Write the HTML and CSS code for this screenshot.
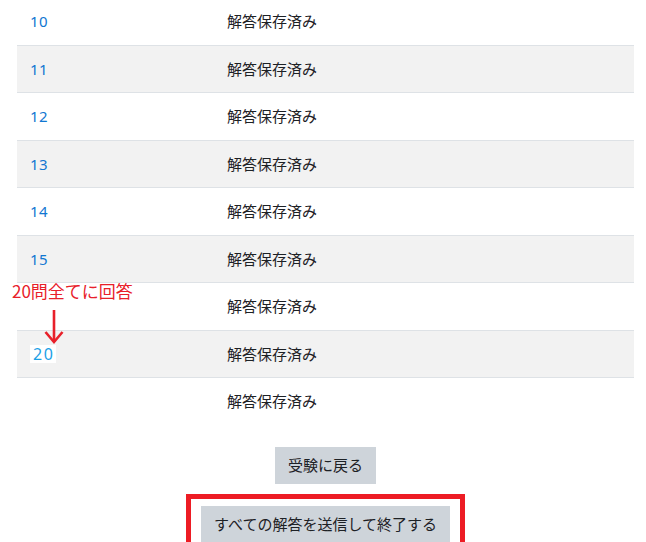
FILE: index.html
```html
<!DOCTYPE html>
<html lang="ja">
<head>
<meta charset="utf-8">
<link rel="stylesheet" href="styles.css">
</head>
<body>
<div class="page">
  <table class="summary">
    <tbody>
      <tr><td class="num"><a href="#">10</a></td><td class="status">解答保存済み</td></tr>
      <tr class="alt"><td class="num"><a href="#">11</a></td><td class="status">解答保存済み</td></tr>
      <tr><td class="num"><a href="#">12</a></td><td class="status">解答保存済み</td></tr>
      <tr class="alt"><td class="num"><a href="#">13</a></td><td class="status">解答保存済み</td></tr>
      <tr><td class="num"><a href="#">14</a></td><td class="status">解答保存済み</td></tr>
      <tr class="alt"><td class="num"><a href="#">15</a></td><td class="status">解答保存済み</td></tr>
      <tr><td class="num"></td><td class="status">解答保存済み</td></tr>
      <tr class="alt"><td class="num"><span class="hl">20</span></td><td class="status">解答保存済み</td></tr>
      <tr><td class="num"></td><td class="status">解答保存済み</td></tr>
    </tbody>
  </table>
  <div class="actions">
    <button class="btn">受験に戻る</button>
    <div class="submit-wrap">
      <button class="btn">すべての解答を送信して終了する</button>
      <div class="redbox"></div>
    </div>
  </div>
  <div class="note">20問全てに回答</div>
  <svg class="arrow" width="20" height="36" viewBox="0 0 20 36">
    <path d="M10 1 V33" stroke="#e8202a" stroke-width="2.6" fill="none"/>
    <path d="M1.5 23 L10 33 L18.5 23" stroke="#e8202a" stroke-width="2.6" fill="none"/>
  </svg>
</div>
</body>
</html>
```

FILE: styles.css
```css
html, body {
  margin: 0;
  padding: 0;
  height: 542px;
  overflow: hidden;
  background: #fff;
}
body {
  font-family: "Noto Sans", "Noto Sans CJK JP", sans-serif;
  font-size: 15px;
  color: #1d2125;
}
.page {
  position: relative;
  width: 617px;
  padding-left: 17px;
}
.summary {
  width: 617px;
  border-collapse: collapse;
  margin-top: -3px;
}
.summary td {
  border-top: 1px solid #dee2e6;
  padding: 12px 0;
  line-height: 22.5px;
  height: 22.5px;
  vertical-align: middle;
}
.summary tr.alt td {
  background: #f2f2f2;
}
.summary td.num {
  width: 197px;
  padding-left: 13px;
}
.summary td.num a {
  color: #1177d1;
  text-decoration: none;
  letter-spacing: 0.3px;
}
.hl {
  display: inline-block;
  background: #fff;
  color: #1ba1e6;
  padding: 0 2px 0 3px;
  line-height: 18px;
  font-size: 16px;
  letter-spacing: 1.5px;
}
.actions {
  display: flex;
  flex-direction: column;
  align-items: center;
  padding-top: 22.5px;
  gap: 22px;
}
.btn {
  font-family: "Noto Sans", "Noto Sans CJK JP", sans-serif;
  font-size: 15px;
  line-height: 23px;
  padding: 7px 13px;
  border: none;
  border-radius: 0;
  background: #ced4da;
  color: #1d2125;
}
.submit-wrap {
  position: relative;
}
.redbox {
  position: absolute;
  left: -15px;
  top: -12px;
  width: 269px;
  height: 60px;
  border: 5px solid #ed1c24;
}
.note {
  position: absolute;
  left: 12px;
  top: 283px;
  color: #e8202a;
  font-family: "Noto Sans CJK JP", sans-serif;
  font-size: 17px;
  line-height: 22px;
}
.arrow {
  position: absolute;
  left: 44px;
  top: 312px;
}
```
